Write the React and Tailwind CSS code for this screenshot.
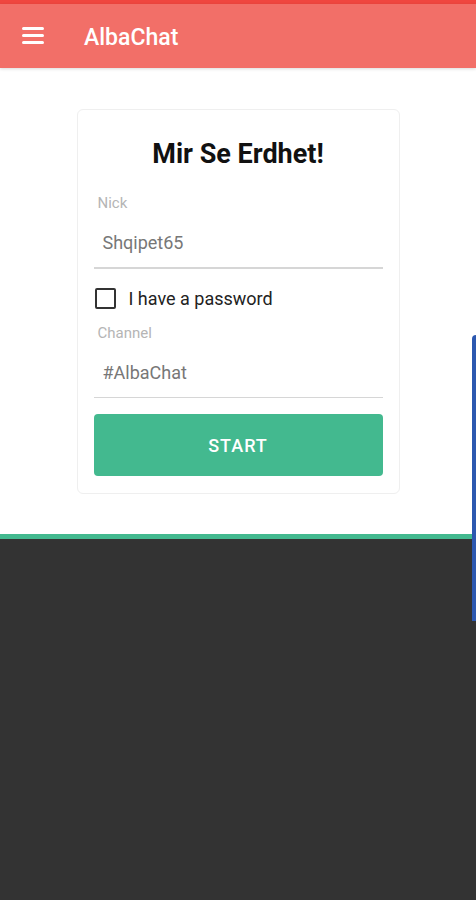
export default function App() {
  return (
    <div className="relative w-[476px] h-[900px] overflow-hidden bg-[#333333]" style={{ fontFamily: "Roboto, 'Noto Sans', sans-serif" }}>
      <div className="bg-white">
        <div className="h-[4px] bg-[#f0463f]" />
        <header className="h-[64px] bg-[#f26f68] flex items-center shadow-[0_1px_3px_rgba(0,0,0,0.15)]">
          <div className="ml-[22px] w-[22px] flex flex-col gap-[4.5px] mt-[-1px]">
            <div className="h-[2.5px] bg-white rounded-sm" />
            <div className="h-[2.5px] bg-white rounded-sm" />
            <div className="h-[2.5px] bg-white rounded-sm" />
          </div>
          <div className="ml-[40px] text-white text-[23px] font-medium mt-[4px]">AlbaChat</div>
        </header>
        <div className="pt-[41px] pb-[40px]">
          <div className="mx-auto w-[323px] border border-[#efefef] rounded-[6px] bg-white px-[16px] pt-[27px] pb-[17px]">
            <h1 className="text-center text-[27px] font-bold text-[#111] leading-[34px]">Mir Se Erdhet!</h1>
            <div className="mt-[23px] pl-[4px] text-[15px] text-[#b5b5b5] leading-[18px]">Nick</div>
            <div className="mt-[20px] pl-[9px] text-[18px] text-[#777] leading-[22px]">Shqipet65</div>
            <div className="mt-[13px] h-[1.5px] bg-[#d6d6d6]" />
            <div className="mt-[19px] flex items-center">
              <div className="w-[21px] h-[21px] border-2 border-[#333] rounded-[2px] ml-[1px]" />
              <span className="ml-[13px] text-[18px] text-[#222] leading-[22px]">I have a password</span>
            </div>
            <div className="mt-[14px] pl-[4px] text-[15px] text-[#b5b5b5] leading-[18px]">Channel</div>
            <div className="mt-[20px] pl-[9px] text-[18px] text-[#777] leading-[22px]">#AlbaChat</div>
            <div className="mt-[13px] h-[1.5px] bg-[#d6d6d6]" />
            <button className="mt-[16px] w-full h-[62px] bg-[#43b98f] rounded-[4px] text-white text-[18px] font-medium tracking-[1px]">START</button>
          </div>
        </div>
      </div>
      <div className="h-[5px] bg-[#43b98f]" />
      <div className="absolute right-0 top-[335px] w-[4px] h-[286px] bg-[#2c58b0] rounded-tl-[4px]" />
    </div>
  );
}
